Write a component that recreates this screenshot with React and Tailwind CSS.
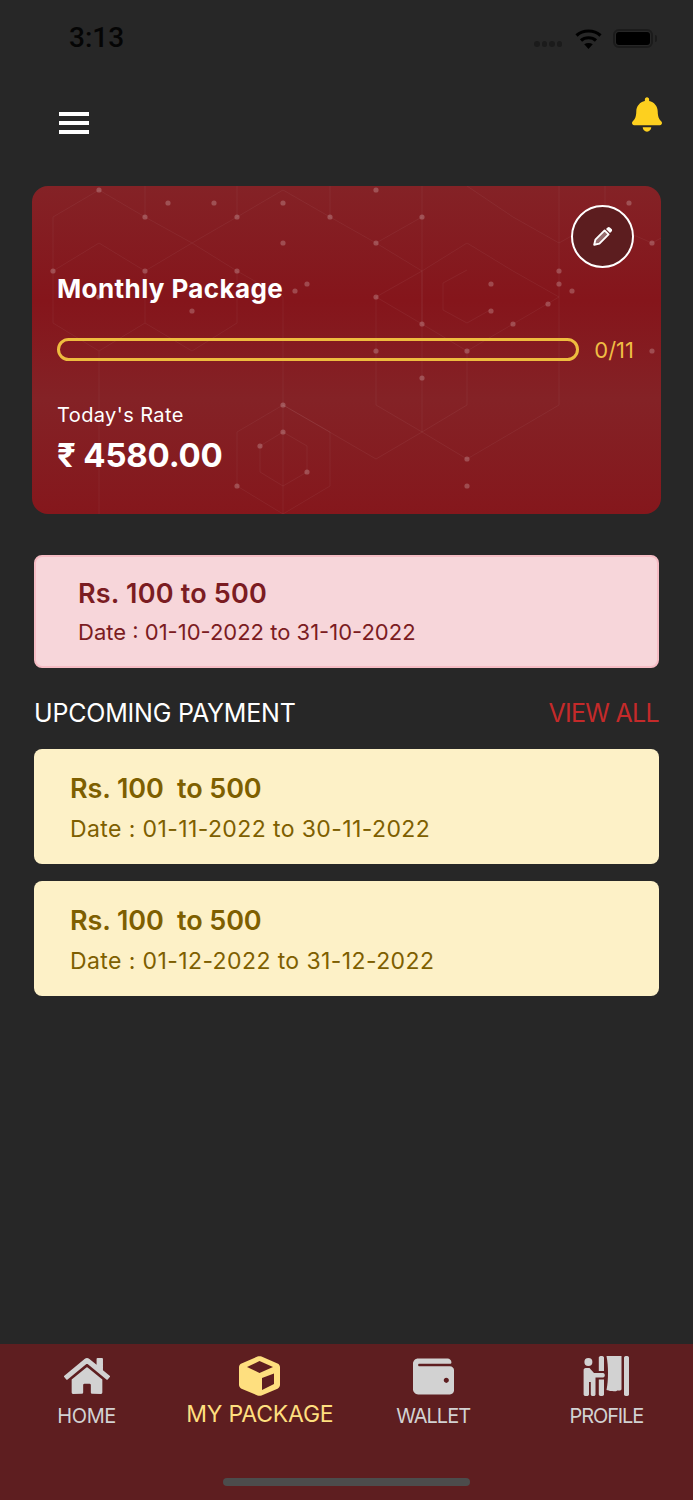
import { FaHome, FaWallet, FaBell } from 'react-icons/fa';

const sans = 'font-["Inter","Noto_Sans",sans-serif]';

const hexLines = [
  'M53 217L99 190L145 217L192 243L237 217L283 190L330 217',
  'M53 271L99 243L145 271L192 243L237 271L283 297',
  'M53 217V323L99 351L145 323L192 351L237 323V271',
  'M145 186V217M145 271V323M237 186V217M99 351V514M283 297V514M330 186V217',
  'M283 405L237 432V486L283 514L330 486V432L283 405',
  'M283 432L260 446V472L283 486L307 472V446Z',
  'M283 405L376 459M330 217L376 243L422 217',
  'M376 243L422 271L467 243L513 271L559 297',
  'M376 297L422 271V323M376 297L422 324L467 351L513 324L559 297',
  'M467 270L443 283V310L467 323L490 310',
  'M376 405L422 432L467 459L559 405V186M376 459L422 432L467 405M467 351V405M422 186V432',
  'M513 217L559 243L605 217V186M629 233L652 243L661 238',
  'M467 186L513 217M376 297V405',
];

const hexDots = [
  [99, 190], [145, 217], [168, 203], [214, 203], [237, 217], [283, 203], [330, 217], [283, 243],
  [53, 271], [145, 271], [237, 271], [99, 297], [192, 311], [295, 291], [307, 284], [283, 405],
  [283, 432], [260, 446], [307, 472], [237, 486], [376, 190], [422, 217], [376, 243], [629, 203],
  [652, 243], [559, 271], [559, 284], [572, 291], [491, 284], [491, 311], [548, 304], [376, 297],
  [422, 324], [513, 324], [376, 351], [467, 351], [652, 351], [422, 378], [467, 459], [467, 486],
];

function HexPattern() {
  return (
    <svg className="absolute inset-0 w-full h-full" viewBox="32 186 629 328" fill="none">
      {hexLines.map((d, i) => (
        <path key={i} d={d} stroke="#ffffff" strokeOpacity="0.05" strokeWidth="1" />
      ))}
      {hexDots.map(([cx, cy], i) => (
        <circle key={i} cx={cx} cy={cy} r="2.6" fill="#ffffff" fillOpacity="0.22" />
      ))}
    </svg>
  );
}

function WifiIcon() {
  return (
    <svg className="w-[27px] h-[21px]" viewBox="0 0 27 21" fill="none">
      <path d="M1.5 7.5C8 1.5 19 1.5 25.5 7.5" stroke="#000" strokeWidth="3.2" />
      <path d="M6 12.5C10 8.8 17 8.8 21 12.5" stroke="#000" strokeWidth="3.2" />
      <path d="M9.2 16.2C12 14.6 15 14.6 17.8 16.2L13.5 21Z" fill="#000" />
    </svg>
  );
}

function PencilIcon() {
  return (
    <svg className="w-[20px] h-[20px] mb-[2px]" viewBox="0 0 20 20" fill="none">
      <path d="M1.2 18.8L2.4 13.6L11.6 4.4L15.6 8.4L6.4 17.6Z" fill="#ffffff" fillOpacity="0.35" stroke="#ffffff" strokeWidth="1.9" strokeLinejoin="round" />
      <path d="M13 3L14.6 1.4C15.3 0.7 16.2 0.7 16.9 1.4L18.6 3.1C19.3 3.8 19.3 4.7 18.6 5.4L17 7Z" fill="#ffffff" />
    </svg>
  );
}

function CubeIcon() {
  return (
    <svg className="w-[41px] h-[40px]" viewBox="239 1356 41 40">
      <path
        fillRule="evenodd"
        fill="#fedf7f"
        d="M257.5 1356.6C258.8 1356 260.2 1356 261.5 1356.6L277.5 1363.4C279 1364 280 1365.5 280 1367.2V1384.8C280 1386.5 279 1388 277.5 1388.7L261.5 1395.4C260.2 1396 258.8 1396 257.5 1395.4L241.5 1388.7C240 1388 239 1386.5 239 1384.8V1367.2C239 1365.5 240 1364 241.5 1363.4ZM259.5 1361L247 1367L259.5 1373L273 1367ZM262 1378V1390L274 1384V1373.5Z"
      />
    </svg>
  );
}

function ProfileIcon() {
  return (
    <svg className="w-[47px] h-[40px]" viewBox="583 1356 47 40" fill="#d2d2d2">
      <circle cx="588.4" cy="1362" r="4" />
      <path d="M585.6 1368H589.5L594 1373H603C605.4 1373 605.4 1377.4 603 1377.4H595.5V1394.4C595.5 1396.6 590.8 1396.6 590.8 1394.4V1382H589V1394.4C589 1396.6 583.6 1396.6 583.6 1394.4V1370.2C583.6 1369 584.4 1368 585.6 1368Z" />
      <path d="M598.8 1357.5C598.8 1355.5 604 1355.5 604 1357.5V1371H598.8ZM598.8 1379.5H604V1394.5C604 1396.6 598.8 1396.6 598.8 1394.5Z" />
      <path d="M606.5 1356H621.5V1389.5C620 1391.5 618 1390 616.5 1391C615 1392 613 1390.5 611.5 1391C610 1391.5 608.5 1390 606.5 1390C608.5 1380 608.5 1366 606.5 1356Z" />
      <path d="M624 1357.5C624 1355.5 629 1355.5 629 1357.5V1394.5C629 1396.6 624 1396.6 624 1394.5Z" />
    </svg>
  );
}

function StatusBar() {
  return (
    <div className="h-[76px] pl-[69px] pr-[36px] flex items-center justify-between">
      <span className="text-[28px] leading-none font-medium text-[#050505] font-['Roboto',sans-serif]">3:13</span>
      <div className="flex items-center">
        <div className="flex gap-[2px] mt-[12px] mr-[13px]">
          <span className="size-[5.5px] rounded-full bg-[#1b1b1b]" />
          <span className="size-[5.5px] rounded-full bg-[#1b1b1b]" />
          <span className="size-[5.5px] rounded-full bg-[#1b1b1b]" />
          <span className="size-[5.5px] rounded-full bg-[#1b1b1b]" />
        </div>
        <WifiIcon />
        <div className="ml-[11px] w-[40px] h-[19px] rounded-[6px] border-2 border-[#1b1b1b] p-[1px]">
          <div className="w-full h-full rounded-[3px] bg-black" />
        </div>
        <div className="ml-[2px] w-[2px] h-[7px] rounded-r-full bg-[#1b1b1b]" />
      </div>
    </div>
  );
}

function TopBar() {
  return (
    <div className="h-[110px] pl-[59px] pr-[31px] pt-[21px] flex items-start justify-between">
      <div className="w-[30px] mt-[15px] flex flex-col gap-[5px]">
        <span className="h-[4px] bg-white" />
        <span className="h-[4px] bg-white" />
        <span className="h-[4px] bg-white" />
      </div>
      <FaBell className="text-[#fdd01f] w-[30px] h-[35px]" />
    </div>
  );
}

function PackageCard() {
  return (
    <div className="relative mx-[32px] h-[328px] rounded-[16px] overflow-hidden bg-[linear-gradient(180deg,#842226_0%,#85151b_35%,#842226_65%,#85171c_100%)]">
      <HexPattern />
      <div className="relative h-full pl-[25px] pr-[27px] flex flex-col">
        <div className="flex justify-end pt-[19px]">
          <button className="size-[63px] rounded-full border-2 border-white bg-[#5c1d1f] flex items-center justify-center">
            <PencilIcon />
          </button>
        </div>
        <h2 className={`${sans} mt-[3px] text-[26px] leading-[36px] font-bold text-white tracking-[0.4px]`}>Monthly Package</h2>
        <div className="mt-[31px] flex items-center justify-between">
          <div className="w-[522px] h-[23px] rounded-full border-[3px] border-[#eebc3f]" />
          <span className={`${sans} text-[22px] leading-none text-[#f0bd44]`}>0/11</span>
        </div>
        <p className={`${sans} mt-[40px] text-[20px] leading-[28px] text-white tracking-[0.4px]`}>Today's Rate</p>
        <p className={`${sans} mt-[6px] text-[33px] leading-[40px] font-bold text-white tracking-[-0.2px]`}>₹ 4580.00</p>
      </div>
    </div>
  );
}

function CurrentCard({ title, date }) {
  return (
    <div className={`${sans} h-[113px] rounded-[8px] border-2 border-[#f6bcc4] bg-[#f7d6da] pl-[42px] pt-[18px] text-[#7b1c22]`}>
      <p className="text-[27px] leading-[38px] font-semibold tracking-[0.2px]">{title}</p>
      <p className="text-[22px] leading-[32px] mt-[3px]">{date}</p>
    </div>
  );
}

function UpcomingCard({ title, date }) {
  return (
    <div className={`${sans} h-[115px] rounded-[8px] bg-[#fdf1c7] pl-[36px] pt-[21px] text-[#7e5f00]`}>
      <p className="text-[27px] leading-[38px] font-semibold whitespace-pre tracking-[-0.1px]">{title}</p>
      <p className="text-[23px] leading-[32px] mt-[5px] tracking-[0.4px]">{date}</p>
    </div>
  );
}

function NavItem({ icon, label, active, tracking }) {
  return (
    <div className="flex flex-col items-center">
      <div className="h-[40px] flex items-center justify-center">{icon}</div>
      <span
        className={
          active
            ? `${sans} mt-[2px] text-[23px] leading-[32px] tracking-[-0.2px] text-[#fedf7f]`
            : `${sans} mt-[4px] text-[20px] leading-[32px] text-[#d2d2d2] ${tracking}`
        }
      >
        {label}
      </span>
    </div>
  );
}

function BottomNav() {
  return (
    <nav className="mt-auto h-[156px] bg-[#5e1e20] flex flex-col">
      <div className="grid grid-cols-4 pt-[12px]">
        <NavItem icon={<FaHome className="text-[#d2d2d2] text-[46px]" />} label="HOME" tracking="tracking-[-0.4px]" />
        <NavItem icon={<CubeIcon />} label="MY PACKAGE" active />
        <NavItem icon={<FaWallet className="text-[#d2d2d2] text-[41px]" />} label="WALLET" tracking="tracking-[-1px]" />
        <NavItem icon={<ProfileIcon />} label="PROFILE" tracking="tracking-[-1.1px]" />
      </div>
      <div className="mt-auto mb-[14px] mx-auto w-[247px] h-[8px] rounded-full bg-[#4c4c4c]" />
    </nav>
  );
}

export default function App() {
  return (
    <div className="w-[693px] h-[1500px] bg-[#272727] flex flex-col overflow-hidden">
      <StatusBar />
      <TopBar />
      <PackageCard />
      <div className="mx-[34px] mt-[41px]">
        <CurrentCard title="Rs. 100 to 500" date="Date : 01-10-2022 to 31-10-2022" />
        <div className={`${sans} mt-[27px] flex items-center justify-between text-[25px] leading-[36px]`}>
          <span className="text-white tracking-[-0.2px]">UPCOMING PAYMENT</span>
          <span className="text-[#c42a2a] tracking-[-0.7px]">VIEW ALL</span>
        </div>
        <div className="mt-[18px] flex flex-col gap-[17px]">
          <UpcomingCard title="Rs. 100  to 500" date="Date : 01-11-2022 to 30-11-2022" />
          <UpcomingCard title="Rs. 100  to 500" date="Date : 01-12-2022 to 31-12-2022" />
        </div>
      </div>
      <BottomNav />
    </div>
  );
}
